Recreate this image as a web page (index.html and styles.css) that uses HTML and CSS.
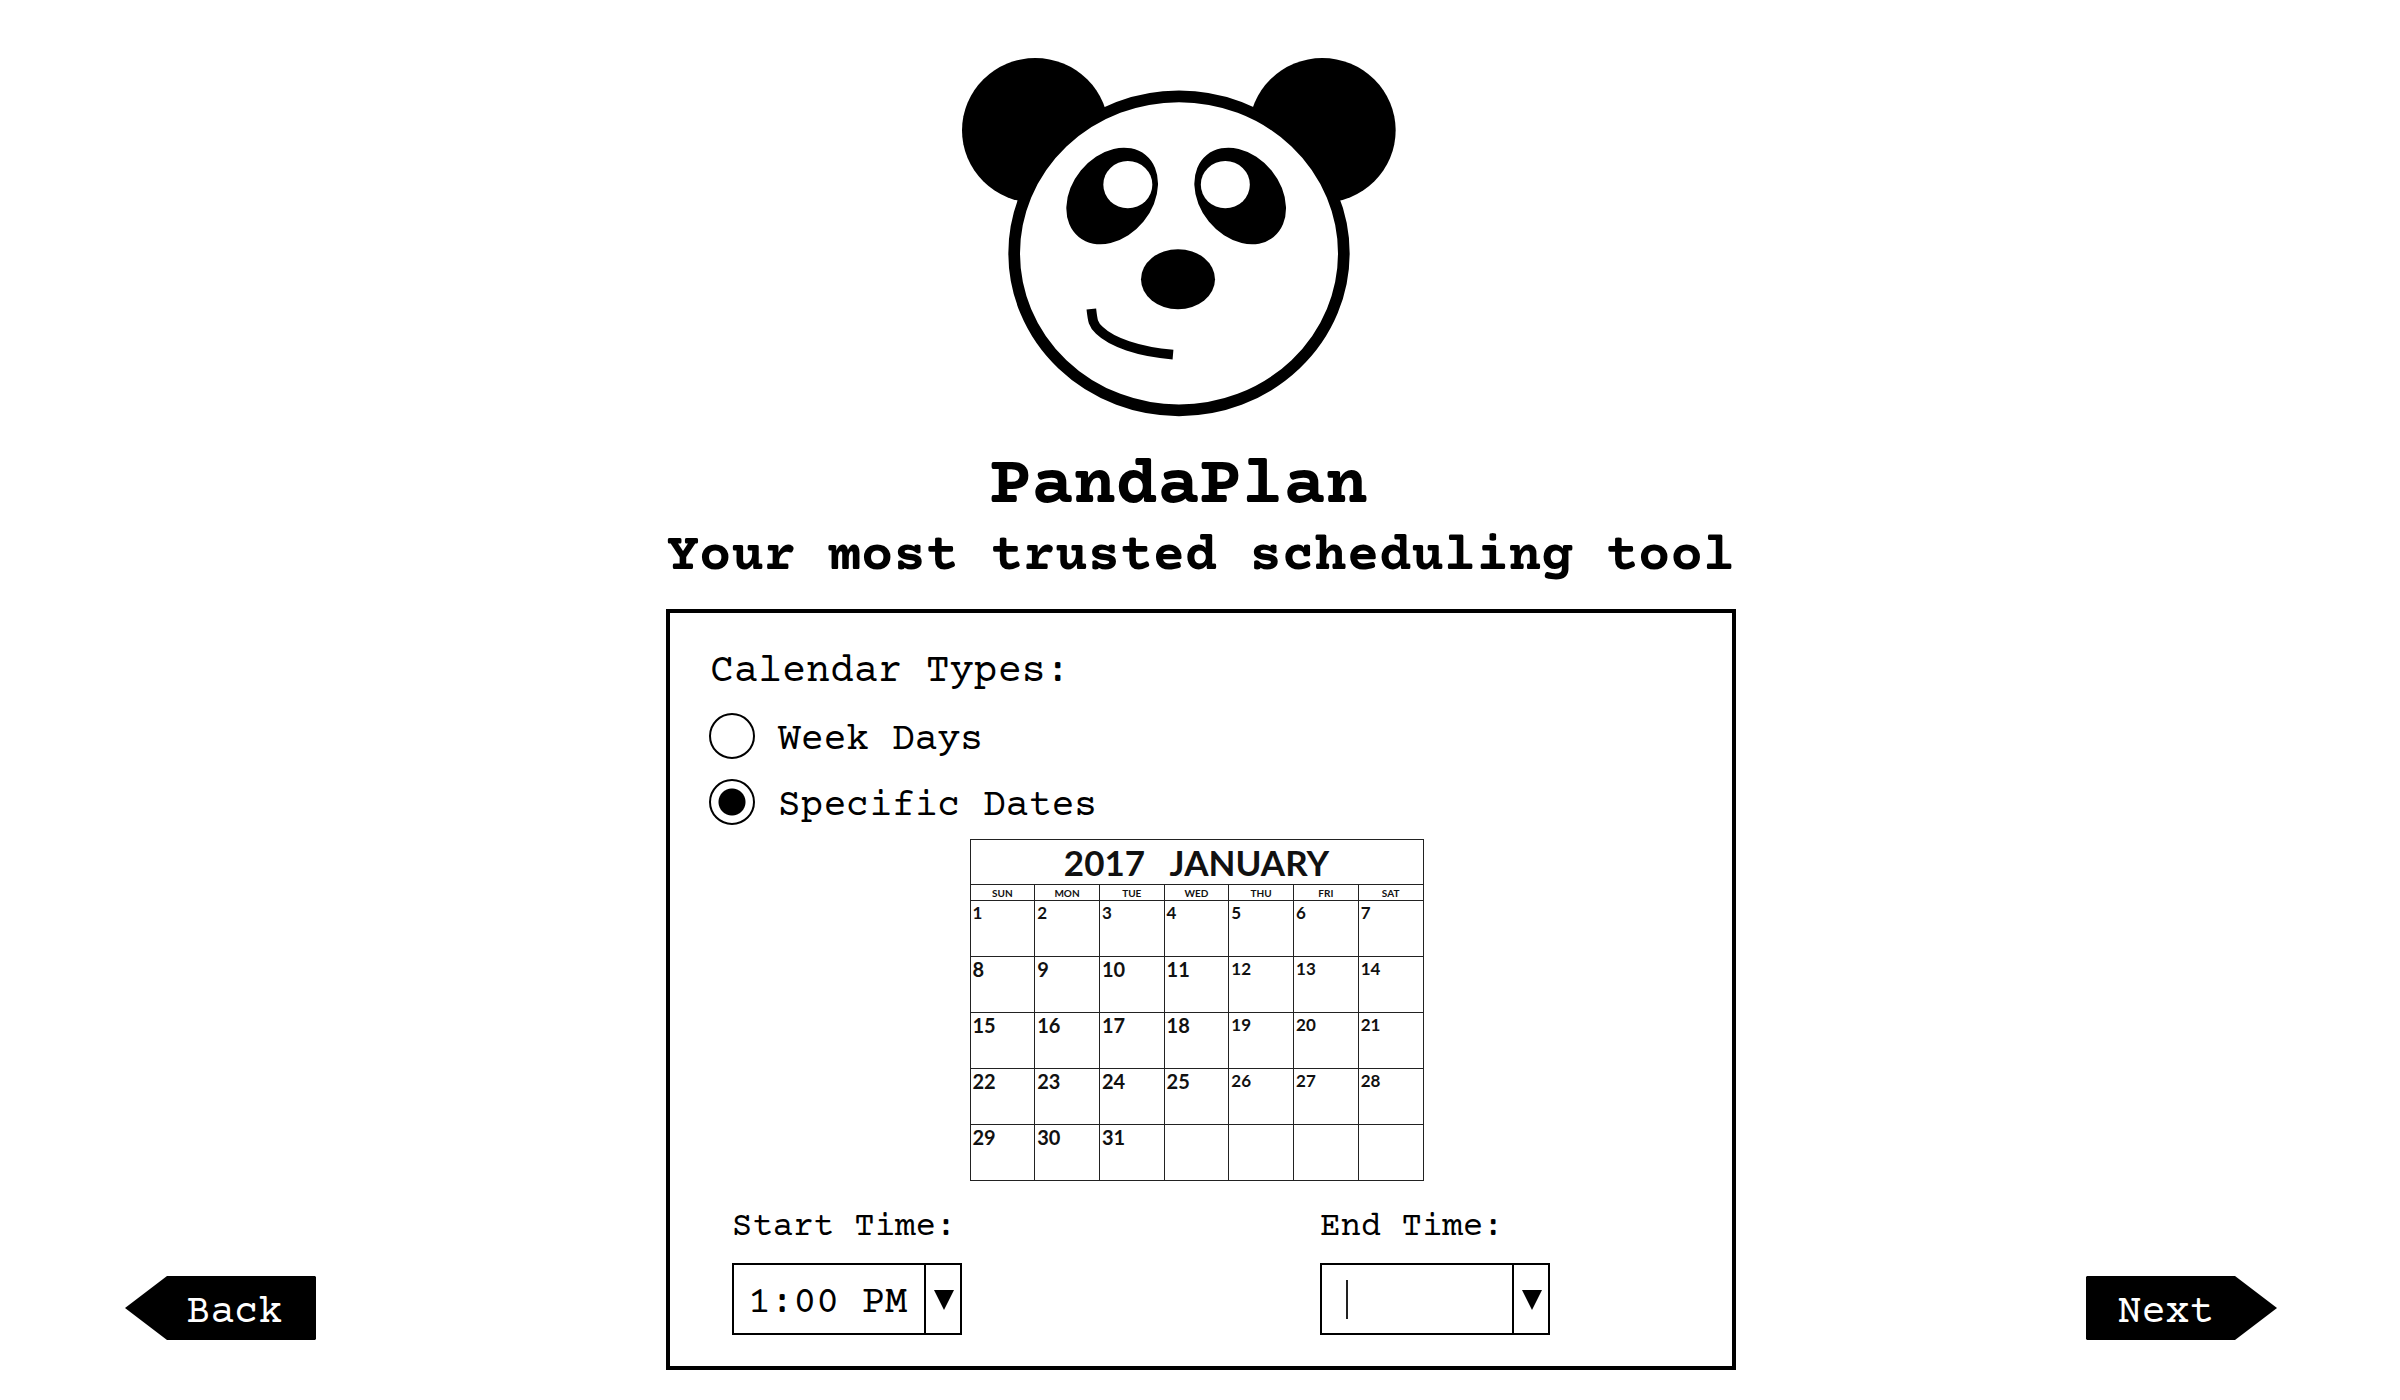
FILE: index.html
```html
<!DOCTYPE html>
<html lang="en">
<head>
<meta charset="utf-8">
<meta name="viewport" content="width=device-width, initial-scale=1">
<title>PandaPlan</title>
<link rel="stylesheet" href="styles.css">
</head>
<body>
<form class="page">
  <button type="button" class="nav nav-back">
    <svg class="nav-shape" viewBox="0 0 191 64" preserveAspectRatio="none" aria-hidden="true"><path d="M0 32 42 0H190L191 1V63L190 64H42Z"/></svg>
    <span class="nav-label">Back</span>
  </button>

  <main class="main">
    <header class="brand">
      <svg class="logo" viewBox="66 53 1302 1077" role="img" aria-label="Panda">
        <ellipse cx="286" cy="270" rx="220" ry="217"/>
        <ellipse cx="1147" cy="270" rx="220" ry="217"/>
        <ellipse cx="717" cy="639" rx="494.5" ry="471" fill="#fff" stroke="#000" stroke-width="35"/>
        <ellipse cx="516.5" cy="467" rx="158.7" ry="121.4" transform="rotate(-50.8 516.5 467)"/>
        <ellipse cx="900.5" cy="467" rx="158.7" ry="121.4" transform="rotate(50.8 900.5 467)"/>
        <ellipse cx="563.5" cy="433" rx="73.5" ry="71" fill="#fff"/>
        <ellipse cx="856" cy="433" rx="73.5" ry="71" fill="#fff"/>
        <ellipse cx="714" cy="716.5" rx="111" ry="90"/>
        <path d="M454 806C458 842 459 852 478 870C515 906 595 934 699 943" fill="none" stroke="#000" stroke-width="29"/>
      </svg>
      <h1 class="title">PandaPlan</h1>
    </header>
    <p class="tagline">Your most trusted scheduling tool</p>

    <section class="panel">
      <fieldset class="types">
        <legend class="types-title">Calendar Types:</legend>
        <label class="choice"><input type="radio" name="type" class="radio"><span class="choice-text">Week Days</span></label>
        <label class="choice"><input type="radio" name="type" class="radio" checked><span class="choice-text">Specific Dates</span></label>
      </fieldset>

      <table class="calendar">
        <thead>
          <tr class="month"><th colspan="7">2017&nbsp;&nbsp; JANUARY</th></tr>
          <tr class="weekdays"><th>SUN</th><th>MON</th><th>TUE</th><th>WED</th><th>THU</th><th>FRI</th><th>SAT</th></tr>
        </thead>
        <tbody>
          <tr class="first"><td>1</td><td>2</td><td>3</td><td>4</td><td>5</td><td>6</td><td>7</td></tr>
          <tr><td>8</td><td>9</td><td>10</td><td>11</td><td>12</td><td>13</td><td>14</td></tr>
          <tr><td>15</td><td>16</td><td>17</td><td>18</td><td>19</td><td>20</td><td>21</td></tr>
          <tr><td>22</td><td>23</td><td>24</td><td>25</td><td>26</td><td>27</td><td>28</td></tr>
          <tr><td>29</td><td>30</td><td>31</td><td></td><td></td><td></td><td></td></tr>
        </tbody>
      </table>

      <div class="times">
        <div class="time">
          <label class="time-label" for="start">Start Time:</label>
          <div class="picker">
            <select class="select" id="start"><option>1:00 PM</option></select>
            <span class="arrow"><svg width="20" height="20" viewBox="0 0 20 20" aria-hidden="true"><path d="M0 0H20L10 20Z"/></svg></span>
          </div>
        </div>
        <div class="time">
          <label class="time-label" for="end">End Time:</label>
          <div class="picker">
            <select class="select" id="end"><option></option></select>
            <span class="caret"></span>
            <span class="arrow"><svg width="20" height="20" viewBox="0 0 20 20" aria-hidden="true"><path d="M0 0H20L10 20Z"/></svg></span>
          </div>
        </div>
      </div>
    </section>
  </main>

  <button type="button" class="nav nav-next">
    <svg class="nav-shape" viewBox="0 0 191 64" preserveAspectRatio="none" aria-hidden="true"><path d="M191 32 149 0H1L0 1V63L1 64H149Z"/></svg>
    <span class="nav-label">Next</span>
  </button>
</form>
</body>
</html>
```
FILE: styles.css
```css
* {
  box-sizing: border-box;
}

body {
  margin: 0;
  background: #fff;
  color: #000;
  font-family: "Courier Prime", "Courier 10 Pitch", "Nimbus Mono PS", "Liberation Mono", "Courier New", monospace;
}

.page {
  display: grid;
  grid-template-columns: 1fr minmax(0, 1070px) 1fr;
  align-items: end;
  padding: 58px 123px 32px 125px;
}

.main {
  display: flex;
  flex-direction: column;
}

.brand {
  display: flex;
  flex-direction: column;
  align-items: center;
  padding-right: 45px;
}

.logo {
  width: 434px;
  height: 359px;
}

.title {
  margin: 30px 0 0;
  font-size: 70px;
  line-height: 80px;
}

.tagline {
  margin: 0;
  font-size: 54px;
  font-weight: bold;
  line-height: 60px;
  text-align: center;
  white-space: nowrap;
}

.panel {
  display: flex;
  flex-direction: column;
  margin-top: 22px;
  padding: 37px 39px 31px;
  border: 4px solid #000;
}

.types {
  display: flex;
  flex-direction: column;
  margin: 0;
  padding: 0;
  border: 0;
}

.types-title {
  padding: 0 0 0 1px;
  font-size: 40px;
  line-height: 46px;
}

.choice {
  display: flex;
  align-items: center;
  gap: 23px;
  height: 66px;
  padding-top: 2px;
  font-size: 38px;
}

.choice:first-of-type {
  margin-top: 6px;
}

.choice-text {
  padding-top: 8px;
}

.radio {
  appearance: none;
  flex: none;
  width: 46px;
  height: 46px;
  margin: 0;
  border: 2px solid #000;
  border-radius: 50%;
}

.radio:checked {
  background: radial-gradient(circle, #000 13px, transparent 14px);
}

.calendar {
  align-self: center;
  width: 454px;
  margin: 5px 9px 0 0;
  border: 1px solid #555;
  border-collapse: collapse;
  table-layout: fixed;
  color: #111;
  font-family: Lato, "Trebuchet MS", sans-serif;
  font-weight: bold;
}

.calendar th,
.calendar td {
  padding: 0;
  border: 1px solid #222;
}

.month th {
  height: 45px;
  font-size: 35px;
  line-height: 40px;
}

.weekdays th {
  height: 16px;
  font-size: 10px;
  line-height: 14px;
}

.calendar td {
  height: 56px;
  padding: 2px 0 0 2px;
  font-size: 20px;
  line-height: 20px;
  vertical-align: top;
}

.calendar .first td,
.calendar td:nth-child(n + 5) {
  font-size: 17px;
}

.times {
  display: flex;
  gap: 358px;
  padding-left: 23px;
  margin-top: 27px;
}

.time {
  display: flex;
  flex-direction: column;
  gap: 15px;
}

.time-label {
  font-size: 34px;
  line-height: 40px;
}

.picker {
  position: relative;
  display: flex;
  width: 230px;
  height: 72px;
  border: 2px solid #000;
}

.select {
  appearance: none;
  flex: 1;
  min-width: 0;
  padding: 8px 0 0 14px;
  border: 0;
  outline: 0;
  background: transparent;
  color: #000;
  font-family: inherit;
  font-size: 38px;
}

.arrow {
  display: flex;
  flex: none;
  align-items: center;
  justify-content: center;
  width: 36px;
  padding: 2px 0 0 1px;
  border-left: 2px solid #000;
  pointer-events: none;
}

.caret {
  position: absolute;
  top: 15px;
  left: 24px;
  width: 2px;
  height: 39px;
  background: #222;
}

.nav {
  position: relative;
  width: 191px;
  height: 64px;
  margin-bottom: 30px;
  padding: 10px 0 0;
  border: 0;
  background: none;
  color: #fff;
  font-family: inherit;
  font-size: 40px;
}

.nav-back {
  padding-left: 28px;
}

.nav-next {
  justify-self: end;
  padding-right: 32px;
}

.nav-shape {
  position: absolute;
  inset: 0;
  width: 100%;
  height: 100%;
  fill: #000;
}

.nav-label {
  position: relative;
}
```
